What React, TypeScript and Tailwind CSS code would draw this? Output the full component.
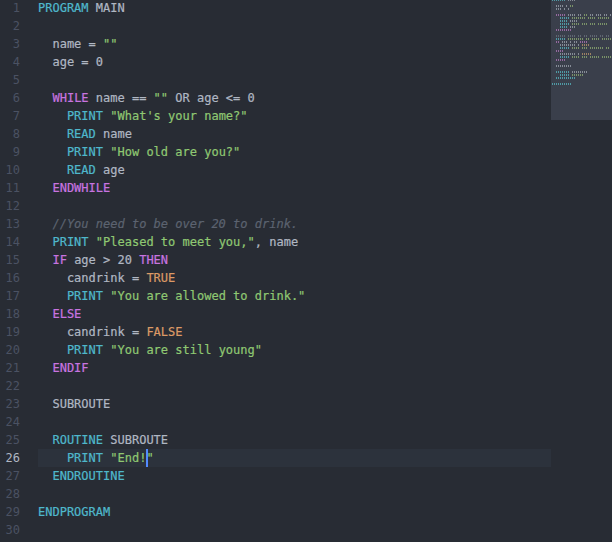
type Kind = "p" | "k" | "c" | "s" | "o" | "m";
type Tok = [Kind, string];

const textColor: Record<Kind, string> = {
  p: "text-[#b0b7c3]",
  k: "text-[#4fb8cc]",
  c: "text-[#c974e0]",
  s: "text-[#8fc872]",
  o: "text-[#dc9a66]",
  m: "text-[#5c6370] italic",
};

const miniColor: Record<Kind, string> = {
  p: "bg-[#858b96]",
  k: "bg-[#4f99a4]",
  c: "bg-[#95689f]",
  s: "bg-[#7a9268]",
  o: "bg-[#9c8163]",
  m: "bg-[#5f6571]",
};

const lines: Tok[][] = [
  [["k", "PROGRAM"], ["p", " MAIN"]],
  [],
  [["p", "  name = "], ["s", '""']],
  [["p", "  age = 0"]],
  [],
  [["p", "  "], ["c", "WHILE"], ["p", " name == "], ["s", '""'], ["p", " OR age <= 0"]],
  [["k", "    PRINT"], ["p", " "], ["s", '"What\'s your name?"']],
  [["k", "    READ"], ["p", " name"]],
  [["k", "    PRINT"], ["p", " "], ["s", '"How old are you?"']],
  [["k", "    READ"], ["p", " age"]],
  [["c", "  ENDWHILE"]],
  [],
  [["m", "  //You need to be over 20 to drink."]],
  [["k", "  PRINT"], ["p", " "], ["s", '"Pleased to meet you,"'], ["p", ", name"]],
  [["c", "  IF"], ["p", " age > 20 "], ["c", "THEN"]],
  [["p", "    candrink = "], ["o", "TRUE"]],
  [["k", "    PRINT"], ["p", " "], ["s", '"You are allowed to drink."']],
  [["c", "  ELSE"]],
  [["p", "    candrink = "], ["o", "FALSE"]],
  [["k", "    PRINT"], ["p", " "], ["s", '"You are still young"']],
  [["c", "  ENDIF"]],
  [],
  [["p", "  SUBROUTE"]],
  [],
  [["k", "  ROUTINE"], ["p", " SUBROUTE"]],
  [["k", "    PRINT"], ["p", " "], ["s", '"End!'], ["s", '"']],
  [["k", "  ENDROUTINE"]],
  [],
  [["k", "ENDPROGRAM"]],
  [],
];

const activeLine = 25;

function MiniRow({ toks }: { toks: Tok[] }) {
  const chars = toks.flatMap(([kind, text]) => text.split("").map((ch) => [kind, ch] as Tok));
  return (
    <div className="flex h-[3px] overflow-hidden">
      {chars.map(([kind, ch], i) => (
        <div key={i} className="h-[2px] w-[2px] shrink-0">
          {ch !== " " && <div className={`h-[2px] w-px ${miniColor[kind]}`} />}
        </div>
      ))}
    </div>
  );
}

export default function App() {
  return (
    <div className="flex h-[542px] w-[612px] overflow-hidden bg-[#282c34] font-['DejaVu_Sans_Mono',monospace] text-[12px] leading-[18px]">
      <div className="-mt-px w-[38px] shrink-0 pr-[18px] text-right">
        {lines.map((_, i) => (
          <div key={i} className={`h-[18px] ${i === activeLine ? "text-[#b0b7c3]" : "text-[#4b5263]"}`}>
            {i + 1}
          </div>
        ))}
      </div>

      <div className="-mt-px min-w-0 flex-1 [-webkit-text-stroke:0.2px]">
        {lines.map((toks, i) => (
          <div key={i} className={`h-[18px] whitespace-pre ${i === activeLine ? "bg-[#2c323c]" : ""}`}>
            {toks.map(([kind, text], j) => (
              <span key={j} className={textColor[kind]}>
                {i === activeLine && j === 3 && (
                  <span className="relative">
                    <span className="absolute left-0 top-[-2px] h-[18px] w-[2px] bg-[#528bff]" />
                  </span>
                )}
                {text}
              </span>
            ))}
          </div>
        ))}
      </div>

      <div className="h-[120px] w-[61px] shrink-0 overflow-hidden bg-[#3a3f4b] pl-px">
        <div className="-mt-px">
          {lines.map((toks, i) => (
            <MiniRow key={i} toks={toks} />
          ))}
        </div>
      </div>
    </div>
  );
}
